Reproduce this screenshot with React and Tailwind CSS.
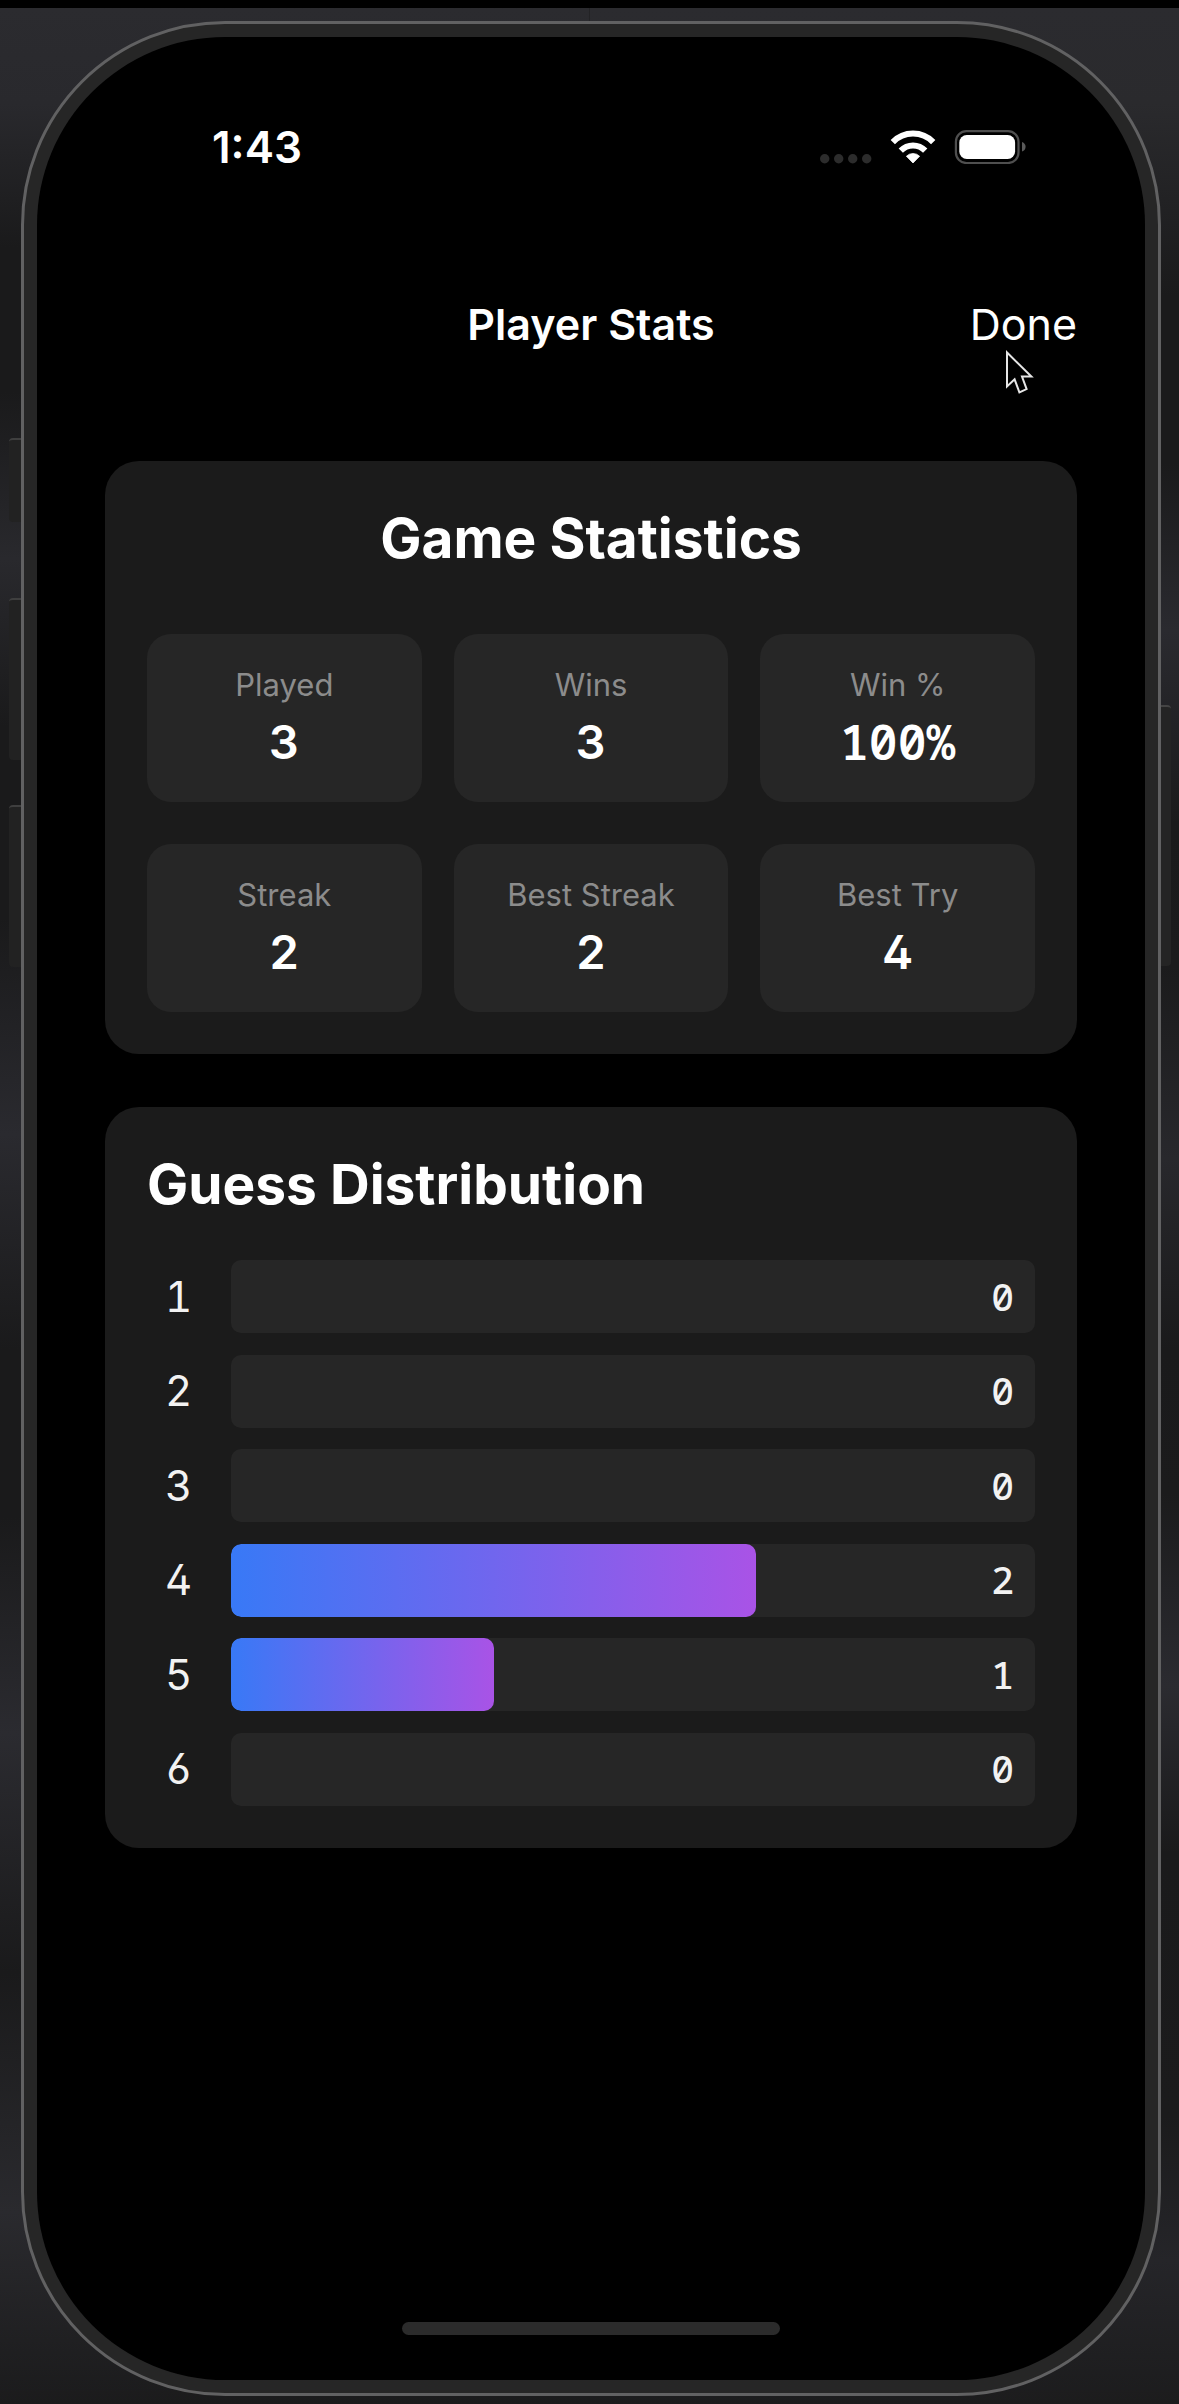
const stats = [
  { label: "Played", value: "3" },
  { label: "Wins", value: "3" },
  { label: "Win %", value: "100%", mono: true },
  { label: "Streak", value: "2" },
  { label: "Best Streak", value: "2" },
  { label: "Best Try", value: "4" },
];

const guesses = [
  { tries: 1, count: 0 },
  { tries: 2, count: 0 },
  { tries: 3, count: 0 },
  { tries: 4, count: 2 },
  { tries: 5, count: 1 },
  { tries: 6, count: 0 },
];

const total = guesses.reduce((sum, g) => sum + g.count, 0);
const FULL_SHARE = 98;

function StatusIcons() {
  return (
    <svg viewBox="0 0 207 34" className="h-[34px] w-[207px]" role="img" aria-label="No signal, Wi-Fi on, battery full">
      <g fill="#2c2c2c">
        <circle cx="4.7" cy="28.7" r="4.7" />
        <circle cx="18.7" cy="28.7" r="4.7" />
        <circle cx="32.7" cy="28.7" r="4.7" />
        <circle cx="46.7" cy="28.7" r="4.7" />
      </g>
      <g fill="none" stroke="#fff" strokeWidth="6">
        <path d="M72.8 12.2a28 28 0 0 1 40.4 0" />
        <path d="M80.8 20.6a17 17 0 0 1 24.4 0" />
      </g>
      <path d="M86.4 26.2a9.5 9.5 0 0 1 13.2 0L93 33Z" fill="#fff" stroke="#fff" strokeWidth="0.8" strokeLinejoin="round" />
      <rect x="135.9" y="1.2" width="62.6" height="31.8" rx="10.5" fill="none" stroke="#4f4f4f" strokeWidth="2.2" />
      <rect x="139.3" y="5" width="55.8" height="24" rx="7.5" fill="#fff" />
      <path d="M202 12v9.6c4.8-1.6 4.8-8 0-9.6Z" fill="#5a5a5a" />
    </svg>
  );
}

function Pointer() {
  return (
    <svg viewBox="0 0 29 46" className="pointer-events-none absolute top-[52px] right-[43px] h-[46px] w-[29px]" aria-hidden="true">
      <path
        d="M2 3.5V37.5l7.6-7.2L14.4 43.4l7.2-3.3L17 27.6h9.4Z"
        fill="#000"
        stroke="#e6e6e6"
        strokeWidth="2"
      />
    </svg>
  );
}

function StatTile({ label, value, mono }) {
  return (
    <div className="flex flex-col items-center gap-2 rounded-[24px] bg-[#262626] pt-[30px] pb-8">
      <dt className="text-[31px] leading-[42px] text-[#8c8c8c]">{label}</dt>
      <dd
        className={
          mono
            ? "font-['Noto_Sans_Mono',monospace] text-[48px] leading-[56px] font-semibold"
            : "text-[47px] leading-[56px] font-semibold [font-feature-settings:'tnum','cv02','cv03']"
        }
      >
        {value}
      </dd>
    </div>
  );
}

function GuessRow({ tries, count }) {
  return (
    <li className="flex items-center gap-[21px]">
      <span className="w-[63px] text-center text-[42px] leading-[50px] text-[#f2f2f2] [font-feature-settings:'tnum','cv02','cv03']">
        {tries}
      </span>
      <div className="relative flex h-[73px] flex-1 items-center justify-end overflow-hidden rounded-[10px] bg-[#262626] pr-[21px]">
        {count > 0 && (
          <div
            className="absolute inset-y-0 left-0 rounded-[10px] bg-linear-to-r/srgb from-[#3879f6] to-[#a953e6]"
            style={{ width: `${(count / total) * FULL_SHARE}%` }}
          />
        )}
        <span className="relative pb-0.5 font-['Noto_Sans_Mono',monospace] text-[38px] leading-[50px] font-medium text-[#f2f2f2]">
          {count}
        </span>
      </div>
    </li>
  );
}

export default function App() {
  return (
    <div className="flex min-h-screen flex-col border-t-8 border-black bg-[#1b1b1c] bg-[linear-gradient(to_bottom,#2b2b2f_0%,#29292d_4%,#1a1a1b_10%,#1a1a1b_16%,#29292d_23%,#1a1a1b_30%,#1a1a1b_38%,#2a2a2f_47%,#1a1a1b_56%,#1a1a1b_63%,#2b2b30_72%,#1a1a1b_82%,#2a2a2e_92%,#1b1b1c_100%),linear-gradient(to_bottom,#2b2b2f_0%,#2a2a2d_4%,#1a1a1b_12%,#1a1a1b_19%,#2a2a2f_26%,#1a1a1b_34%,#1b1b1c_40%,#28282c_48%,#1a1a1b_56%,#1b1b1c_62%,#2b2b30_70%,#1a1a1b_77%,#1b1b1c_88%,#252529_94%,#1c1c1d_100%)] bg-[length:50%_100%] bg-[position:left,right] bg-no-repeat pt-[13px] pr-[18px] pb-2 pl-[21px] font-['Inter',sans-serif] text-white">
      <div className="relative flex flex-1 flex-col rounded-[204px] border-[3px] border-[#616162] bg-[#262626] p-[13px]">
        {/* Hardware buttons */}
        <span className="absolute top-[414px] -left-[15px] h-[84px] w-3 rounded-l-[4px] border-t-2 border-[#3f3f3f] bg-[#222222]" />
        <span className="absolute top-[574px] -left-[15px] h-[162px] w-3 rounded-l-[4px] border-t-2 border-[#3f3f3f] bg-[#222222]" />
        <span className="absolute top-[781px] -left-[15px] h-[162px] w-3 rounded-l-[4px] border-t-2 border-[#3f3f3f] bg-[#222222]" />
        <span className="absolute top-[681px] -right-[13px] h-[261px] w-[10px] rounded-r-[4px] border-t-2 border-[#444444] bg-[#242424]" />

        <div className="flex flex-1 flex-col rounded-[188px] bg-black pt-[83px] pb-[45px]">
          <div className="flex items-center justify-between pr-[118px] pl-[175px]">
            <time className="text-[44px] leading-[54px] font-semibold">1:43</time>
            <StatusIcons />
          </div>

          <main className="flex flex-1 flex-col px-[68px]">
            <header className="relative mt-[123px] grid grid-cols-[1fr_auto_1fr] items-center">
              <h1 className="col-start-2 text-[43px] leading-[54px] font-semibold">Player Stats</h1>
              <button type="button" className="justify-self-end text-[43px] leading-[54px]">
                Done
              </button>
              <Pointer />
            </header>

            <section className="mt-[110px] rounded-[34px] bg-[#1b1b1b] p-[42px]">
              <h2 className="mb-[61px] text-center text-[55px] leading-[70px] font-bold">Game Statistics</h2>
              <dl className="grid grid-cols-3 gap-x-8 gap-y-[42px]">
                {stats.map((s) => (
                  <StatTile key={s.label} {...s} />
                ))}
              </dl>
            </section>

            <section className="mt-[53px] rounded-[34px] bg-[#1b1b1b] p-[42px]">
              <h2 className="mb-[41px] text-[55px] leading-[70px] font-bold">Guess Distribution</h2>
              <ol className="flex min-h-[546px] flex-col justify-between">
                {guesses.map((g) => (
                  <GuessRow key={g.tries} {...g} />
                ))}
              </ol>
            </section>
          </main>

          <div className="mx-auto h-[13px] w-[378px] rounded-full bg-[#2b2b2b]" />
        </div>
      </div>
    </div>
  );
}
